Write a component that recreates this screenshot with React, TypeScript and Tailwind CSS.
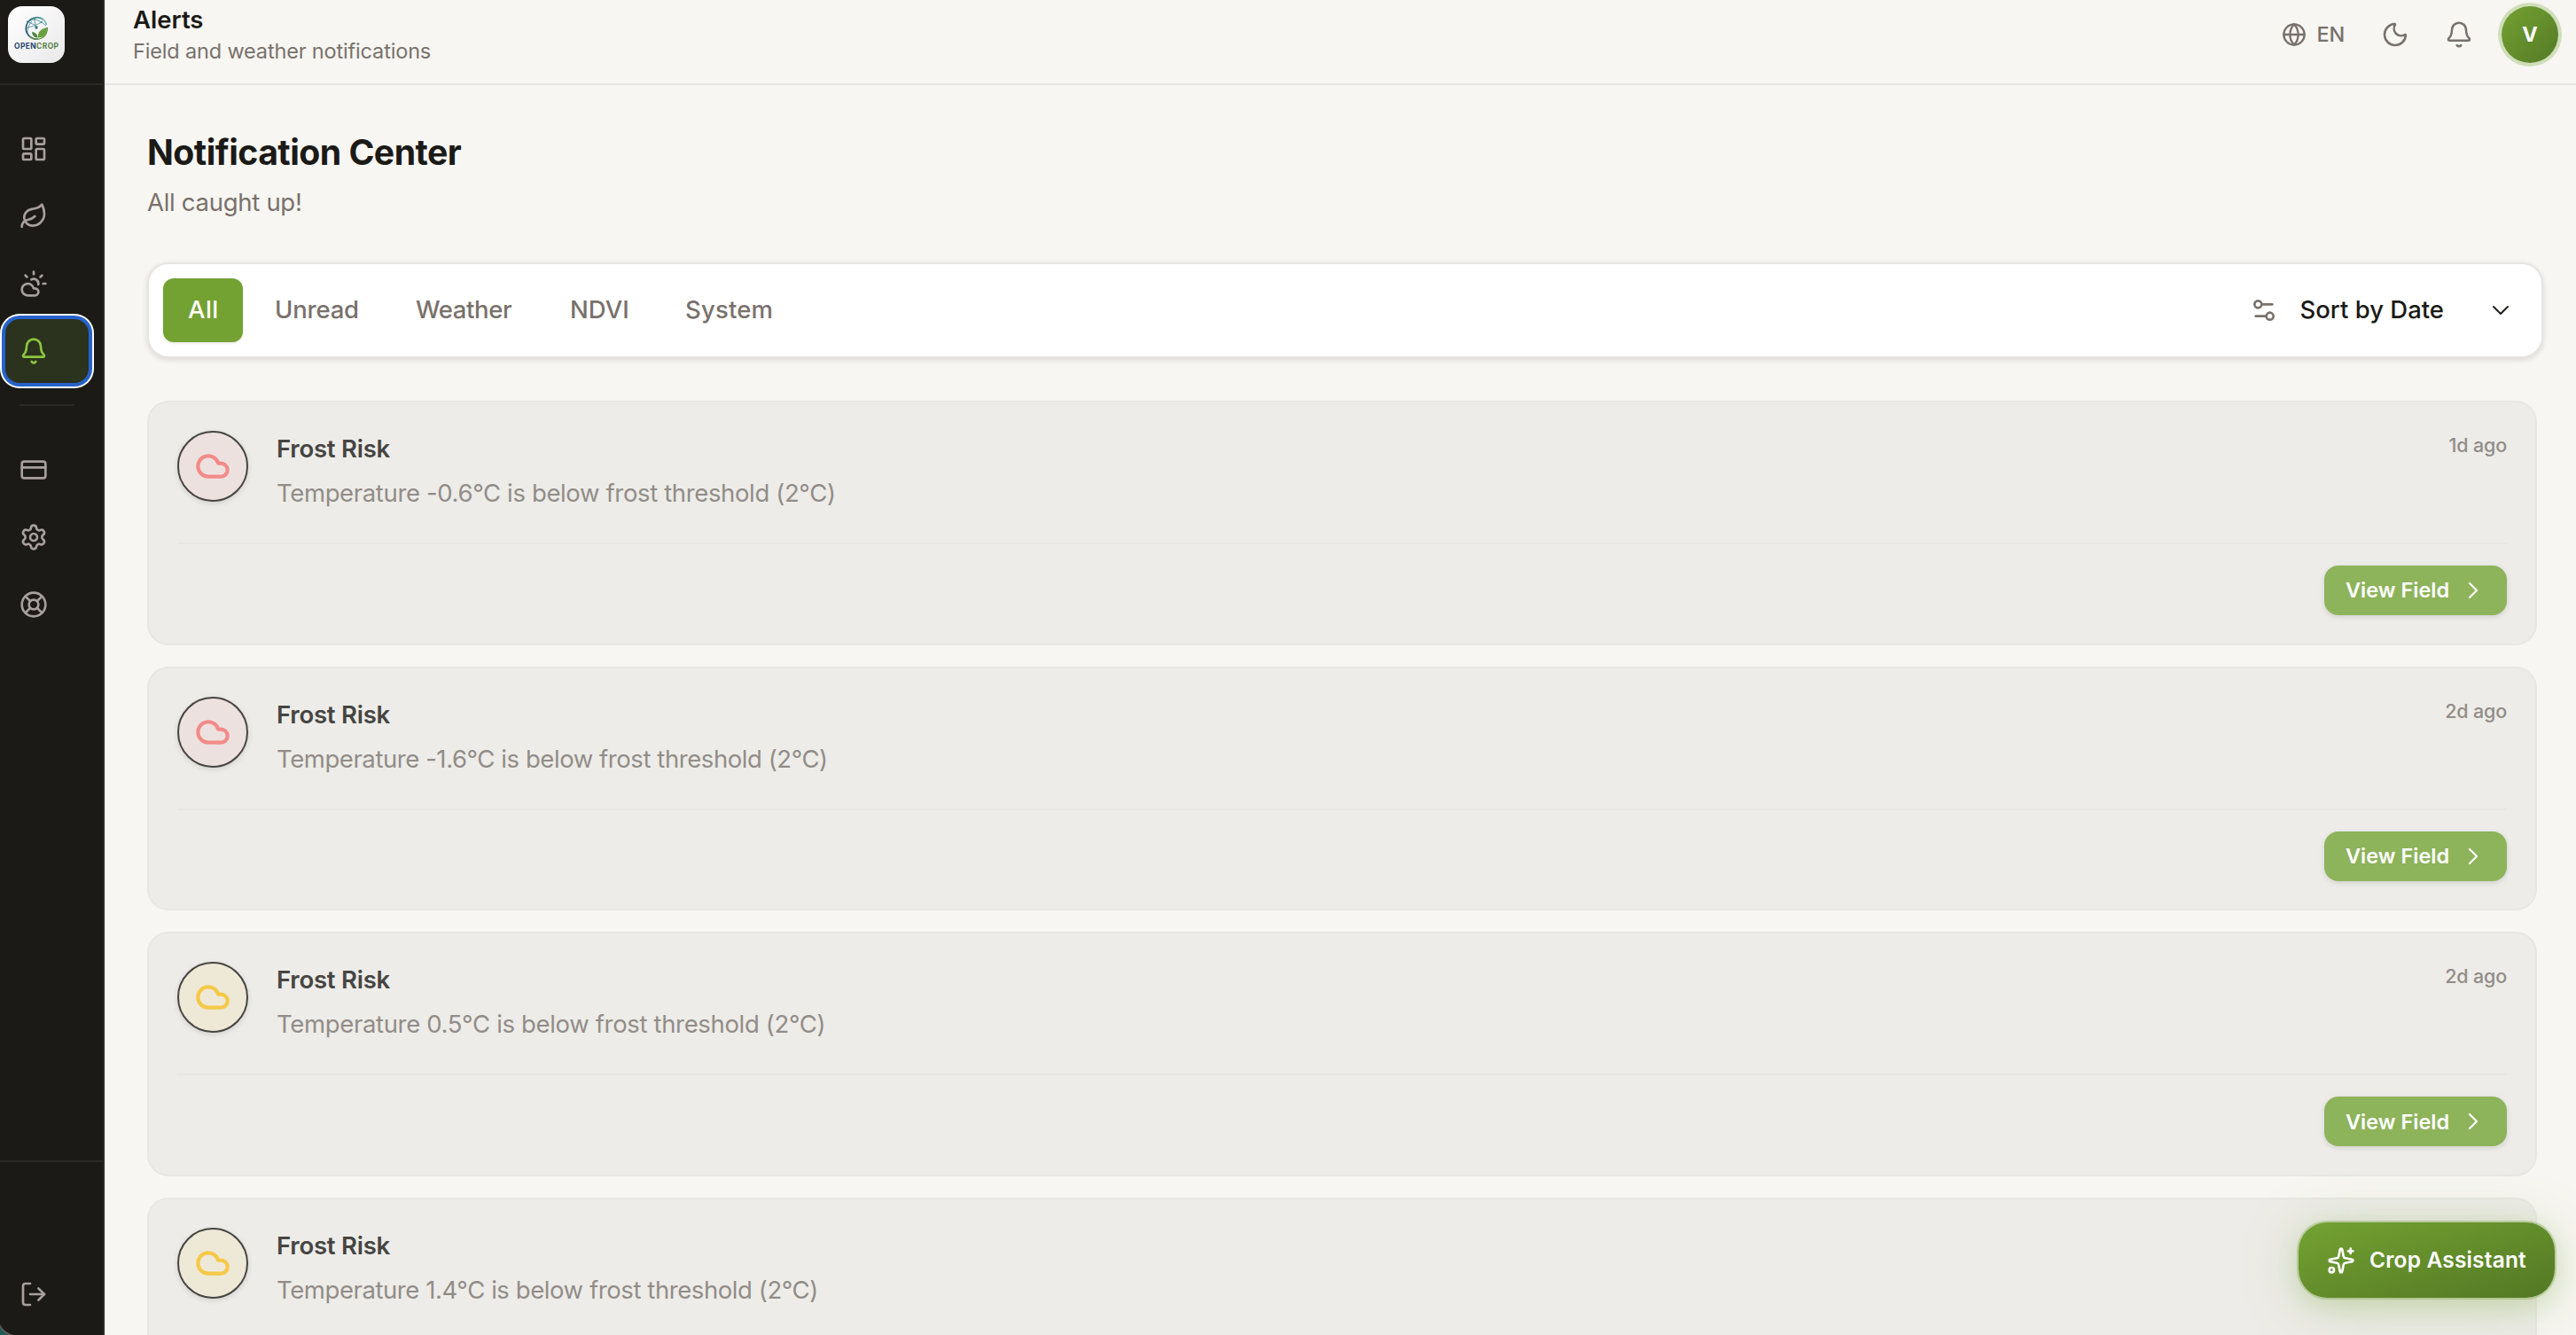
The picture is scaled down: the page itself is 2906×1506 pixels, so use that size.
import {
  Bell,
  ChevronDown,
  ChevronRight,
  Cloud,
  CloudSun,
  CreditCard,
  Globe,
  LayoutDashboard,
  Leaf,
  LifeBuoy,
  LogOut,
  Moon,
  Settings,
  Settings2,
  Sparkles,
  type LucideIcon,
} from 'lucide-react'
import clsx from 'clsx'
import { useState } from 'react'

interface Alert {
  id: number
  message: string
  spacing: string
  time?: string
  severity: 'critical' | 'warning'
  hasField?: boolean
}

const alerts: Alert[] = [
  { id: 1, message: 'Temperature -0.6°C is below frost threshold (2°C)', spacing: 'tracking-[-0.36px]', time: '1d ago', severity: 'critical', hasField: true },
  { id: 2, message: 'Temperature -1.6°C is below frost threshold (2°C)', spacing: 'tracking-[-0.43px]', time: '2d ago', severity: 'critical', hasField: true },
  { id: 3, message: 'Temperature 0.5°C is below frost threshold (2°C)', spacing: 'tracking-[-0.34px]', time: '2d ago', severity: 'warning', hasField: true },
  { id: 4, message: 'Temperature 1.4°C is below frost threshold (2°C)', spacing: 'tracking-[-0.42px]', severity: 'warning' },
]

const filters = [
  { label: 'All', className: 'w-[90px] tracking-[0.4px]' },
  { label: 'Unread', className: 'w-[151px] tracking-[-0.2px]' },
  { label: 'Weather', className: 'w-[166px] tracking-[-0.4px]' },
  { label: 'NDVI', className: 'w-[122px]' },
  { label: 'System', className: 'w-[154px] tracking-[0.18px]' },
]

const Logo = () => (
  <div className="w-16 h-16 rounded-2xl bg-linear-to-br from-white to-[#e9e9ea] overflow-hidden">
    <svg viewBox="0 0 64 64" className="w-16 h-16" fill="none">
      <defs>
        <linearGradient id="globe" x1="19" y1="30" x2="44" y2="18" gradientUnits="userSpaceOnUse">
          <stop stopColor="#1f3f70" />
          <stop offset="1" stopColor="#4fa79a" />
        </linearGradient>
      </defs>
      <path d="M40.5 15.5A12.3 12.3 0 1 0 34 37.2" stroke="url(#globe)" strokeWidth="1.6" />
      <path d="M40.5 15.5A12.3 12.3 0 0 1 43.6 21" stroke="#5fae9b" strokeWidth="1.2" />
      <path d="M22 17.5l8-3 8 3.5 5 4M22 17.5l9 4 7-3.5M30 14.5l1 7M20 25l11-3.5 1 4M23 34c-2-6-1-11 4-17" stroke="#3f8794" strokeWidth=".8" />
      <path d="M24 33.5c3 3.5 9 5 14 2.5 5-2.5 6.500-7 6.500-12" stroke="#5f9245" strokeWidth="1.3" />
      <circle cx="32" cy="24" r="1.7" fill="#2f7686" />
      <circle cx="22" cy="17.5" r="1" fill="#2f7686" />
      <circle cx="30" cy="14.5" r="1" fill="#3c9390" />
      <circle cx="38" cy="18" r="1" fill="#3c9390" />
      <path d="M34 35.5c-1-6 3-10 10-11.500 0 7-3 11.500-10 11.500Z" fill="#6a9f3e" />
      <path d="M33.500 35.500c-4 0-6-2.500-6.500-6.500 4 .5 6.500 3 6.500 6.500Z" fill="#4d8446" />
      <text x="7" y="47.8" fontFamily="Inter, sans-serif" fontSize="8.4" fontWeight="700" textLength="50" lengthAdjust="spacing">
        <tspan fill="#23406f">OPEN</tspan>
        <tspan fill="#55803f">CROP</tspan>
      </text>
    </svg>
  </div>
)

interface NavItemProps {
  icon: LucideIcon
  active?: boolean
}

const NavItem = ({ icon: Icon, active }: NavItemProps) => (
  <button
    className={clsx(
      'flex items-center w-[94px] h-[72px] pl-4 rounded-[16px]',
      active ? 'bg-[#2b321d] text-[#8bc63f] shadow-[0_0_0_4px_#2762cb,0_0_0_6px_#ffffff]' : 'text-[#a8a09d]'
    )}
  >
    <Icon size={32} strokeWidth={2} />
  </button>
)

const Sidebar = () => (
  <aside className="w-[118px] h-full shrink-0 bg-[#1b1a17] border-r-2 border-[#2a2927] flex flex-col relative">
    <div className="h-24 shrink-0 border-b-2 border-[#2a2927] pl-[9px] pt-[7px]">
      <Logo />
    </div>

    <nav className="flex-1 flex flex-col gap-1 pl-1.5 pt-9">
      <NavItem icon={LayoutDashboard} />
      <NavItem icon={Leaf} />
      <NavItem icon={CloudSun} />
      <NavItem icon={Bell} active />
      <div className="w-[62px] h-0.5 ml-4 mt-5 mb-8 bg-[#2a2927]" />
      <NavItem icon={CreditCard} />
      <NavItem icon={Settings} />
      <NavItem icon={LifeBuoy} />
    </nav>

    <div className="h-[197px] shrink-0 border-t-2 border-[#2a2927] pl-1.5 pt-[113px]">
      <NavItem icon={LogOut} />
    </div>

    {/* Rounded window corner */}
    <svg className="absolute left-0 bottom-0 w-4 h-3" viewBox="0 0 16 12">
      <path d="M0 0C3 6 8 10 16 12H0Z" fill="#5b5a58" />
      <path d="M0 3C2 7 5 10 9 12H0Z" fill="#1f5a55" />
    </svg>
  </aside>
)

const TopNavbar = () => (
  <header className="h-24 shrink-0 border-b-2 border-[#e6e5e3] pl-8 pr-5 pb-4 flex items-center justify-between">
    <div>
      <h1 className="text-[27.5px] leading-9 font-semibold text-[#1b1a17]">Alerts</h1>
      <p className="mt-0.5 text-[23.5px] leading-8 tracking-[-0.16px] text-[#79716c]">Field and weather notifications</p>
    </div>

    <div className="flex items-center text-[#79716c]">
      <button className="flex items-center gap-[11px] text-[23.5px] font-medium tracking-[-0.2px]">
        <Globe size={28} strokeWidth={2} />
        EN
      </button>
      <Moon size={32} strokeWidth={1.9} className="ml-[41px]" />
      <Bell size={32} strokeWidth={1.9} className="ml-10" />
      <div className="ml-8 w-16 h-16 rounded-full bg-linear-to-br from-[#74a232] to-[#557a26] ring-4 ring-[#d0deba] flex items-center justify-center text-white text-[23.5px] font-bold">
        V
      </div>
    </div>
  </header>
)

const FilterBar = () => {
  const [filter, setFilter] = useState('All')

  return (
    <div className="mt-12 mr-[37px] h-[108px] bg-white border-2 border-[#e6e5e3] rounded-3xl shadow-[0_2px_6px_rgba(0,0,0,0.12)] pl-4 pr-[30px] flex items-center justify-between text-[27.5px] font-medium">
      <div className="flex gap-2">
        {filters.map(({ label, className }) => (
          <button
            key={label}
            onClick={() => setFilter(label)}
            className={clsx(
              'h-[72px] rounded-xl pl-7 text-left',
              className,
              filter === label ? 'bg-[#74a232] text-white shadow-[0_1px_3px_rgba(0,0,0,0.12)]' : 'text-[#79716c]'
            )}
          >
            {label}
          </button>
        ))}
      </div>

      <div className="flex items-center">
        <Settings2 size={32} strokeWidth={2} className="text-[#79716c] mr-6" />
        <span className="text-[#1b1a17]">Sort by Date</span>
        <ChevronDown size={32} strokeWidth={1.4} className="ml-12 text-[#1b1a17]" />
      </div>
    </div>
  )
}

const AlertCard = ({ alert }: { alert: Alert }) => (
  <article className="h-[275.6px] shrink-0 bg-[#edece8] border-2 border-[#e8e7e5] rounded-3xl px-8 pt-8">
    <div className="flex h-[126px]">
      <div
        className={clsx(
          'w-20 h-20 rounded-full border-2 border-[#464542] flex items-center justify-center shadow-[0_2px_6px_rgba(0,0,0,0.12)]',
          alert.severity === 'critical' ? 'bg-[#ede1df] text-[#f28b88]' : 'bg-[#eee8d7] text-[#f5c847]'
        )}
      >
        <Cloud size={40} strokeWidth={2.5} />
      </div>
      <div className="ml-8 flex-1">
        <h3 className="text-[27.5px] leading-10 font-semibold tracking-[-0.23px] text-[#464542]">Frost Risk</h3>
        <p className={clsx('mt-2 text-[27.5px] leading-11 text-[#928c88]', alert.spacing)}>{alert.message}</p>
      </div>
      {alert.time && (
        <span className="text-[21.5px] leading-8 font-medium tracking-[-0.18px] text-[#928c88]">{alert.time}</span>
      )}
    </div>

    {alert.hasField && (
      <div className="border-t-2 border-[#e8e7e5] pt-6 flex justify-end">
        <button className="w-[206px] h-14 rounded-2xl bg-[#8db35b] text-white pl-6 pr-[22px] flex items-center justify-between text-[23.5px] font-semibold shadow-[0_2px_6px_rgba(0,0,0,0.12)]">
          View Field
          <ChevronRight size={32} strokeWidth={1.6} />
        </button>
      </div>
    )}
  </article>
)

const App = () => {
  return (
    <div className="w-full h-screen overflow-hidden bg-[#f7f6f2] flex relative font-['Inter','Liberation_Sans',sans-serif]">
      <Sidebar />

      <div className="flex-1 min-w-0 flex flex-col">
        <TopNavbar />

        <main className="flex-1 min-h-0 overflow-hidden pl-12 pt-[52px]">
          <h2 className="text-[39.2px] leading-12 font-bold tracking-[-0.53px] text-[#1b1a17]">Notification Center</h2>
          <p className="mt-3 text-[27.5px] leading-10 tracking-[-0.29px] text-[#79716c]">All caught up!</p>

          <FilterBar />

          <div className="mt-12 mr-11 flex flex-col gap-6">
            {alerts.map(alert => (
              <AlertCard key={alert.id} alert={alert} />
            ))}
          </div>
        </main>
      </div>

      {/* Floating assistant */}
      <button className="absolute right-6 bottom-[42px] w-[289px] h-[85px] rounded-[32px] bg-linear-to-br from-[#74a232] to-[#537824] text-white pl-8 flex items-center gap-4 text-[24.5px] font-semibold tracking-[0.17px] shadow-[0_0_0_2px_rgba(140,175,95,0.45),0_8px_24px_rgba(116,162,50,0.16),0_8px_64px_rgba(116,162,50,0.28)]">
        <Sparkles size={32} strokeWidth={2} />
        Crop Assistant
      </button>
    </div>
  )
}

export default App
